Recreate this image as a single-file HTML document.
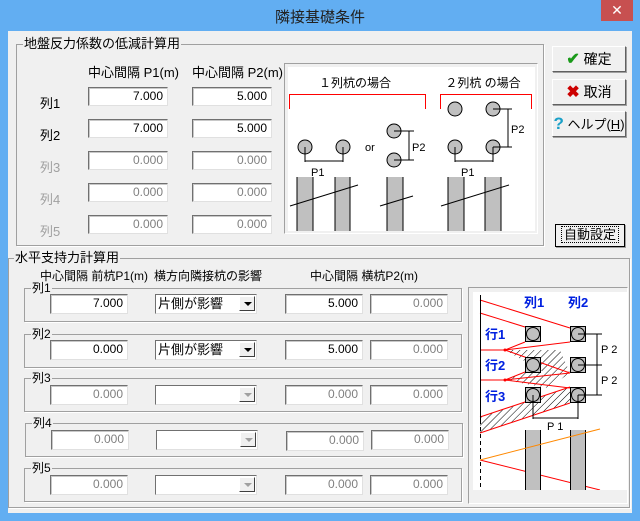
<!DOCTYPE html>
<html><head><meta charset="utf-8"><style>
*{margin:0;padding:0;box-sizing:border-box}
body{width:640px;height:521px;background:#62aef2;position:relative;overflow:hidden;font-family:"Liberation Sans","Noto Sans CJK JP",sans-serif;font-size:12px;color:#000}
.a{position:absolute}
.body{left:8px;top:31px;width:624px;height:482px;background:#f0f0f0}
.title{left:0;top:6px;width:640px;text-align:center;font-size:15px;color:#222}
.close{left:601px;top:0;width:32px;height:21px;background:#c75050;color:#fff;text-align:center;font-size:14px;line-height:20px}
.grp{border:1px solid #a0a0a0;box-shadow:1px 1px 0 #fff}
.lbl{background:#f0f0f0;padding:0 1px;line-height:13px}
.in{background:#fff;border-top:1px solid #707070;border-left:1px solid #707070;border-bottom:1px solid #e0e0e0;border-right:1px solid #e0e0e0;box-shadow:inset 1px 1px 0 #c8c8c8;text-align:right;padding-right:4px;line-height:17px;font-size:12px}
.dis{color:#808080}
.cb{background:#fff;border-top:1px solid #707070;border-left:1px solid #707070;border-bottom:1px solid #e0e0e0;border-right:1px solid #e0e0e0;line-height:17px;padding-left:2px;font-size:13px}
.dd{position:absolute;right:1px;top:1px;width:16px;height:15px;background:#f0f0f0;border-right:1px solid #404040;border-bottom:1px solid #404040;border-top:1px solid #fff;border-left:1px solid #fff}
.dd:after{content:"";position:absolute;left:4px;top:5px;border-left:4px solid transparent;border-right:4px solid transparent;border-top:4px solid #000}
.dd.g:after{border-top-color:#a0a0a0}
.btn{background:#f0f0f0;border:1px solid;border-color:#fff #606060 #606060 #fff;box-shadow:1px 1px 0 #a0a0a0;font-size:14px;text-align:center;line-height:24px}
.gray{color:#a0a0a0}
</style></head><body>
<div class="a title">隣接基礎条件</div>
<div class="a close">✕</div>
<div class="a body"></div>

<div class="a grp" style="left:16px;top:44px;width:528px;height:202px"></div>
<div class="a lbl" style="left:23px;top:37px;font-size:13px">地盤反力係数の低減計算用</div>
<div class="a" style="left:88px;top:62px;font-size:13px">中心間隔 P1(m)</div>
<div class="a" style="left:192px;top:62px;font-size:13px">中心間隔 P2(m)</div>

<div class="a" style="left:40px;top:93px;font-size:13px">列1</div>
<div class="a" style="left:40px;top:125px;font-size:13px">列2</div>
<div class="a gray" style="left:40px;top:157px;font-size:13px">列3</div>
<div class="a gray" style="left:40px;top:189px;font-size:13px">列4</div>
<div class="a gray" style="left:40px;top:221px;font-size:13px">列5</div>

<div class="a in" style="left:88px;top:87px;width:80px;height:19px">7.000</div>
<div class="a in" style="left:192px;top:87px;width:80px;height:19px">5.000</div>
<div class="a in" style="left:88px;top:119px;width:80px;height:19px">7.000</div>
<div class="a in" style="left:192px;top:119px;width:80px;height:19px">5.000</div>
<div class="a in dis" style="left:88px;top:151px;width:80px;height:19px">0.000</div>
<div class="a in dis" style="left:192px;top:151px;width:80px;height:19px">0.000</div>
<div class="a in dis" style="left:88px;top:183px;width:80px;height:19px">0.000</div>
<div class="a in dis" style="left:192px;top:183px;width:80px;height:19px">0.000</div>
<div class="a in dis" style="left:88px;top:215px;width:80px;height:19px">0.000</div>
<div class="a in dis" style="left:192px;top:215px;width:80px;height:19px">0.000</div>

<div class="a" style="left:284px;top:63px;width:254px;height:171px;border:1px solid #a0a0a0;border-right-color:#fff;border-bottom-color:#fff;background:#f0f0f0"></div>
<svg class="a" style="left:288px;top:67px" width="247" height="164" viewBox="288 67 247 164">
<rect x="288" y="67" width="247" height="164" fill="#fff"/>
<text x="355" y="87" font-size="12" text-anchor="middle" font-family="Liberation Sans,Noto Sans CJK JP,sans-serif">１列杭の場合</text>
<text x="483" y="87" font-size="12" text-anchor="middle" font-family="Liberation Sans,Noto Sans CJK JP,sans-serif">２列杭 の場合</text>
<path d="M289.5 109V94.5H425.5V109M440.5 109V94.5H531.5V109" stroke="#f00" fill="none"/>
<g fill="#c0c0c0" stroke="#000">
<circle cx="305" cy="147" r="7"/><circle cx="343" cy="147" r="7"/>
<circle cx="394" cy="131" r="7"/><circle cx="394" cy="160" r="7"/>
<circle cx="455" cy="109" r="7"/><circle cx="493" cy="109" r="7"/>
<circle cx="455" cy="147" r="7"/><circle cx="493" cy="147" r="7"/>
</g>
<g stroke="#000" fill="none">
<path d="M305 147V162M343 147V162M305 161H343"/>
<path d="M394 131H414M394 160H414M409 131V160"/>
<path d="M455 147V162M493 147V162M455 161H493M493 109H512M493 147H512M508 109V147"/>
</g>
<text x="311" y="176" font-size="11">P1</text>
<text x="461" y="176" font-size="11">P1</text>
<text x="412" y="151" font-size="11">P2</text>
<text x="511" y="133" font-size="11">P2</text>
<text x="365" y="151" font-size="11">or</text>
<g fill="#c0c0c0"><rect x="297.5" y="177" width="15" height="54"/><rect x="335.5" y="177" width="14" height="54"/><rect x="387.5" y="177" width="15" height="54"/><rect x="448.5" y="177" width="15" height="54"/><rect x="485.5" y="177" width="15" height="54"/></g>
<g stroke="#000"><path d="M297 231V177M313 231V177M335 231V177M350 231V177M387 231V177M403 231V177M448 231V177M464 231V177M485 231V177M501 231V177"/>
<path d="M290 206L358 185M380 206L413 196M441 206L509 185"/></g>
</svg>

<div class="a btn" style="left:552px;top:46px;width:74px;height:26px"><span style="color:#1a9a1a;font-weight:bold;font-size:16px">✔</span> 確定</div>
<div class="a btn" style="left:552px;top:79px;width:74px;height:26px"><span style="color:#c00;font-weight:bold;font-size:16px">✖</span> 取消</div>
<div class="a btn" style="left:552px;top:111px;width:74px;height:26px;font-size:13px"><span style="color:#1aa0c8;font-weight:bold;font-size:17px">?</span> ヘルプ(<u>H</u>)</div>
<div class="a btn" style="left:555px;top:224px;width:70px;height:23px;line-height:20px;border-color:#000;font-size:13px"><span style="border:1px dotted #000;padding:0 2px">自動設定</span></div>

<div class="a grp" style="left:8px;top:258px;width:622px;height:250px"></div>
<div class="a lbl" style="left:14px;top:251px;font-size:13px">水平支持力計算用</div>
<div class="a" style="left:40px;top:267px">中心間隔 前杭P1(m)</div>
<div class="a" style="left:154px;top:267px">横方向隣接杭の影響</div>
<div class="a" style="left:310px;top:267px">中心間隔 横杭P2(m)</div>

<div class="a grp" style="left:24px;top:288px;width:438px;height:34px"></div>
<div class="a lbl" style="left:31px;top:282px">列1</div>
<div class="a in" style="left:50px;top:294px;width:78px;height:20px">7.000</div>
<div class="a cb" style="left:155px;top:294px;width:102px;height:20px">片側が影響<div class="dd"></div></div>
<div class="a in" style="left:285px;top:294px;width:78px;height:20px">5.000</div>
<div class="a in dis" style="left:370px;top:294px;width:78px;height:20px">0.000</div>

<div class="a grp" style="left:24px;top:334px;width:438px;height:34px"></div>
<div class="a lbl" style="left:31px;top:328px">列2</div>
<div class="a in" style="left:50px;top:340px;width:78px;height:20px">0.000</div>
<div class="a cb" style="left:155px;top:340px;width:102px;height:20px">片側が影響<div class="dd"></div></div>
<div class="a in" style="left:285px;top:340px;width:78px;height:20px">5.000</div>
<div class="a in dis" style="left:370px;top:340px;width:78px;height:20px">0.000</div>

<div class="a grp" style="left:24px;top:378px;width:438px;height:34px"></div>
<div class="a lbl" style="left:31px;top:372px">列3</div>
<div class="a in dis" style="left:50px;top:385px;width:78px;height:20px">0.000</div>
<div class="a cb" style="left:155px;top:385px;width:102px;height:20px"><div class="dd g"></div></div>
<div class="a in dis" style="left:285px;top:385px;width:78px;height:20px">0.000</div>
<div class="a in dis" style="left:370px;top:385px;width:78px;height:20px">0.000</div>

<div class="a grp" style="left:25px;top:423px;width:438px;height:34px"></div>
<div class="a lbl" style="left:32px;top:417px">列4</div>
<div class="a in dis" style="left:51px;top:430px;width:78px;height:20px">0.000</div>
<div class="a cb" style="left:156px;top:430px;width:102px;height:20px"><div class="dd g"></div></div>
<div class="a in dis" style="left:286px;top:431px;width:78px;height:20px">0.000</div>
<div class="a in dis" style="left:371px;top:430px;width:78px;height:20px">0.000</div>

<div class="a grp" style="left:24px;top:468px;width:438px;height:34px"></div>
<div class="a lbl" style="left:31px;top:462px">列5</div>
<div class="a in dis" style="left:50px;top:475px;width:78px;height:20px">0.000</div>
<div class="a cb" style="left:155px;top:475px;width:102px;height:20px"><div class="dd g"></div></div>
<div class="a in dis" style="left:285px;top:475px;width:78px;height:20px">0.000</div>
<div class="a in dis" style="left:370px;top:475px;width:78px;height:20px">0.000</div>

<div class="a" style="left:468px;top:287px;width:160px;height:217px;border:1px solid #a0a0a0;border-right-color:#fff;border-bottom-color:#fff"></div>
<svg class="a" style="left:473px;top:292px" width="155" height="198" viewBox="473 292 155 198">
<defs><pattern id="h" width="5" height="5" patternUnits="userSpaceOnUse" patternTransform="rotate(45)"><path d="M0 0V5" stroke="#000" stroke-width="1"/></pattern></defs>
<rect x="473" y="292" width="155" height="198" fill="#fff"/>
<path d="M505 350L560 350L570 373L545 373Z M505 380L525 372L570 373L548 388Z" fill="url(#h)"/>
<path d="M480 417L570 387L570 403L480 433Z" fill="url(#h)"/>
<g stroke="#f00" fill="none">
<path d="M480 300L570 328M480 313L525 327"/>
<path d="M480 350H505M505 350L525 342M505 350L570 342M505 350L570 373"/>
<path d="M480 380H505M505 380L525 372M505 380L570 373M505 380L570 388"/>
<path d="M480 417L570 387M480 433L570 403"/>
<path d="M480 460L600 490"/>
</g>
<circle cx="505" cy="350" r="1.5" fill="#f00"/><circle cx="505" cy="380" r="1.5" fill="#f00"/>
<path d="M480.5 295V420" stroke="#000"/>
<path d="M480.5 420V490" stroke="#000" stroke-dasharray="4 3"/>
<g fill="#c0c0c0" stroke="#000">
<rect x="525.5" y="326.5" width="15" height="15"/><rect x="570.5" y="326.5" width="15" height="15"/>
<rect x="525.5" y="357.5" width="15" height="15"/><rect x="570.5" y="357.5" width="15" height="15"/>
<rect x="525.5" y="387.5" width="15" height="15"/><rect x="570.5" y="387.5" width="15" height="15"/>
<circle cx="533" cy="334" r="6.5"/><circle cx="578" cy="334" r="6.5"/><circle cx="533" cy="365" r="6.5"/><circle cx="578" cy="365" r="6.5"/><circle cx="533" cy="395" r="6.5"/><circle cx="578" cy="395" r="6.5"/>
</g>
<g stroke="#000" fill="none"><path d="M533 395V419M578 395V419M533 418H578M578 334H602M578 365H602M578 395H602M597 334V395"/></g>
<text x="547" y="430" font-size="11">P 1</text>
<text x="601" y="353" font-size="11">P 2</text>
<text x="601" y="384" font-size="11">P 2</text>
<g fill="#c0c0c0"><rect x="525" y="430" width="15" height="60"/><rect x="570" y="430" width="15" height="60"/></g>
<g stroke="#000"><path d="M525.5 430V490M540.5 430V490M570.5 430V490M585.5 430V490"/></g>
<path d="M480 460L600 429" stroke="#f80"/>
<g fill="#0020e0" font-weight="bold" font-size="13" font-family="Liberation Sans,Noto Sans CJK JP,sans-serif">
<text x="524" y="307">列1</text><text x="568" y="307">列2</text>
<text x="485" y="339">行1</text><text x="485" y="370">行2</text><text x="485" y="401">行3</text>
</g>
</svg>
</body></html>
